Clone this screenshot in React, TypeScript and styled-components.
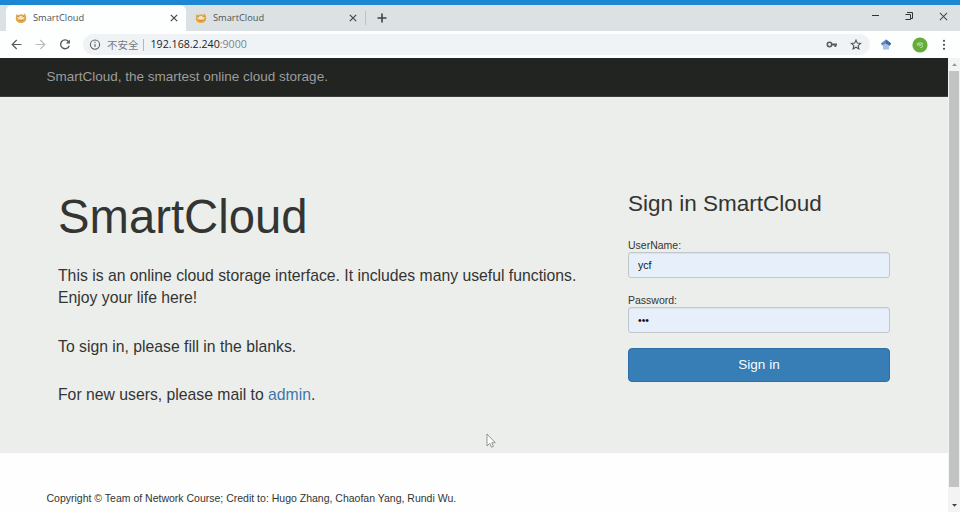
import React from "react";
import styled, { createGlobalStyle } from "styled-components";

const GlobalStyle = createGlobalStyle`
  * { box-sizing: border-box; }
  html, body { margin: 0; padding: 0; overflow: hidden; }
  body { background: #fdfefd; color: #333533; font-family: "Liberation Sans", Arial, sans-serif; }
`;

const Window = styled.div`
  position: relative;
  display: flex;
  flex-direction: column;
  width: 960px;
  height: 512px;
  overflow: hidden;
`;

const TabStrip = styled.div`
  flex: none;
  display: flex;
  height: 31px;
  border-top: 5px solid #1c88d4;
  background: #dce2e3;
  padding-left: 6px;
`;

const Tab = styled.div<{ $active?: boolean }>`
  display: flex;
  align-items: center;
  width: ${(p) => (p.$active ? 180 : 179)}px;
  height: 26px;
  padding: 0 8px 0 9px;
  border-radius: 6px 6px 0 0;
  background: ${(p) => (p.$active ? "#fdfefe" : "transparent")};
  font: 9.3px/12px "Open Sans", "Noto Sans", sans-serif;
  color: #4d5458;
`;

const TabTitle = styled.span`
  flex: 1;
  margin-left: 6px;
`;

const NewTab = styled.div`
  display: flex;
  align-items: center;
  height: 14px;
  margin-top: 6px;
  padding-left: 11px;
  border-left: 1px solid #bdc4c7;
`;

const WindowControls = styled.div`
  display: flex;
  align-items: center;
  gap: 25px;
  height: 22px;
  margin-left: auto;
  padding-right: 12px;
`;

const Toolbar = styled.div`
  flex: none;
  display: flex;
  align-items: center;
  height: 27px;
  padding: 0 11px;
  background: #fdfefe;
`;

const NavButtons = styled.div`
  display: flex;
  gap: 13px;
`;

const AddressBar = styled.div`
  display: flex;
  align-items: center;
  width: 787px;
  height: 21px;
  margin-left: 12px;
  padding: 0 8px 0 6px;
  border-radius: 11px;
  background: #f0f3f5;
  font: 10.65px/14px "Open Sans", "Noto Sans", sans-serif;
  color: #7d8487;
`;

const Security = styled.span`
  margin-left: 6px;
  padding-right: 4px;
  border-right: 1px solid #b3b8bb;
  font: 10.5px/12px "Noto Sans CJK SC", sans-serif;
  color: #73787b;
`;

const Url = styled.span`
  flex: 1;
  margin-left: 7px;
  position: relative;
  top: -0.5px;
  b { font-weight: 400; color: #202426; }
`;

const FieldActions = styled.div`
  display: flex;
  gap: 12px;
`;

const Extensions = styled.div`
  display: flex;
  align-items: center;
  flex: 1;
  padding-left: 10px;
`;

const Avatar = styled.svg`
  margin: 0 11px 0 20px;
`;

const Viewport = styled.div`
  display: flex;
  flex: 1;
  min-height: 0;
`;

const Page = styled.main`
  display: flex;
  flex-direction: column;
  width: 948px;
`;

const Navbar = styled.nav`
  flex: none;
  height: 39px;
  padding-left: 46.5px;
  border-bottom: 1px solid #3c3e3c;
  background: #222422;
  color: #9b9d9b;
  font-size: 13.5px;
  line-height: 38px;
`;

const Jumbotron = styled.section`
  flex: none;
  display: flex;
  justify-content: space-between;
  height: 356px;
  padding: 0 58px;
  background: #eceeec;
`;

const Intro = styled.div`
  width: 540px;
  padding-top: 94px;
`;

const Title = styled.h1`
  margin: 0 0 18px;
  font-size: 47.25px;
  line-height: 52px;
  font-weight: 400;
`;

const Lead = styled.p`
  margin: 0 0 26px;
  padding-top: 4px;
  font-size: 15.75px;
  line-height: 22.4px;
  & + & { padding-top: 0; }
  a { color: #3b77ae; text-decoration: none; }
`;

const SignIn = styled.form`
  width: 262px;
  padding-top: 94px;
`;

const SignInTitle = styled.h2`
  margin: 0 0 22px;
  font-size: 22.5px;
  line-height: 25px;
  font-weight: 400;
`;

const Field = styled.label`
  display: block;
  height: 55px;
  font-size: 10.5px;
  line-height: 15px;
`;

const Input = styled.input`
  display: block;
  width: 262px;
  height: 26px;
  margin-top: -1px;
  padding: 0 9px;
  border: 1px solid #c1c7cb;
  border-radius: 3px;
  outline: none;
  background: #e7effa;
  box-shadow: inset 0 1px 1px rgba(0, 0, 0, 0.06);
  color: #101214;
  font: 10.5px "Liberation Sans", Arial, sans-serif;
`;

const Submit = styled.button`
  display: block;
  width: 262px;
  height: 34px;
  padding: 0 0 1px;
  border: 1px solid #2c6fa6;
  border-radius: 4px;
  background: #367eb5;
  color: #fafcfd;
  font: 13.5px "Liberation Sans", Arial, sans-serif;
`;

const Footer = styled.footer`
  padding: 38px 0 0 46.5px;
  font-size: 10.5px;
  line-height: 15px;
`;

const Scrollbar = styled.div`
  display: flex;
  flex-direction: column;
  align-items: center;
  justify-content: space-between;
  width: 12px;
  background: #f2f3f2;
`;

const ScrollArrow = styled.div`
  display: flex;
  height: 13px;
  align-items: center;
`;

const Thumb = styled.div`
  width: 10px;
  height: 416px;
  margin-bottom: auto;
  background: #c2c4c3;
`;

const Pointer = styled.svg`
  position: absolute;
  left: 486px;
  top: 433px;
`;

const Favicon = () => (
  <svg width="12" height="12" viewBox="0 0 12 12">
    <ellipse cx="6" cy="6.8" rx="5.3" ry="4.2" fill="#e8a83f" />
    <path d="M.8 5 1.4 2.2 3.5 3.2 6 2.5l2.7.6L9.8 1.3 11.3 5Z" fill="#d9ab5e" />
    <path d="M2.4 5Q6 3 9.4 4.9L8.8 7Q6 8.4 3 7Z" fill="#f8e5b1" />
    <path d="M2.5 4.2 4.2 5M9.3 4 7.6 5" stroke="#896947" strokeWidth=".7" />
    <path d="M3.8 8.3q2.2 1 4.4 0" stroke="#cf762c" strokeWidth=".7" fill="none" />
  </svg>
);

const Close = ({ size = 7, weight = 1.2 }: { size?: number; weight?: number }) => (
  <svg width={size} height={size} viewBox="0 0 8 8" stroke="#42484b" strokeWidth={weight}>
    <path d="m.8.8 6.4 6.4m0-6.4L.8 7.2" />
  </svg>
);

const Arrow = ({ forward }: { forward?: boolean }) => (
  <svg width="11" height="12" viewBox="0 0 11 12" fill="none" stroke={forward ? "#b9bcbe" : "#565b5e"} strokeWidth="1.2">
    <path d={forward ? "M.5 5.5h9M5.3 1 9.8 5.5 5.3 10" : "M10.5 5.5h-9M5.7 1 1.2 5.5 5.7 10"} />
  </svg>
);

const tabs = [
  { title: "SmartCloud", active: true },
  { title: "SmartCloud", active: false },
];

export default function App() {
  return (
    <Window>
      <GlobalStyle />
      <TabStrip>
        {tabs.map((tab, i) => (
          <Tab key={i} $active={tab.active}>
            <Favicon />
            <TabTitle>{tab.title}</TabTitle>
            <Close size={8} />
          </Tab>
        ))}
        <NewTab>
          <svg width="10" height="10" viewBox="0 0 10 10" stroke="#3d4346" strokeWidth="1.6">
            <path d="M5 .5v9M.5 5h9" />
          </svg>
        </NewTab>
        <WindowControls>
          <svg width="9" height="9" viewBox="0 0 9 9" stroke="#303537">
            <path d="M1 3.5h7" />
          </svg>
          <svg width="9" height="9" viewBox="0 0 9 9" fill="none" stroke="#303537">
            <path d="M.5 2.5h5v5h-5M2 .5h5.5v6H5.5" />
          </svg>
          <Close size={9} weight={0.9} />
        </WindowControls>
      </TabStrip>
      <Toolbar>
        <NavButtons>
          <Arrow />
          <Arrow forward />
          <svg width="12" height="12" viewBox="0 0 12 12" fill="none" stroke="#54595c" strokeWidth="1.3">
            <path d="M10.2 6.7A4.4 4.4 0 1 1 9.4 2.5" />
            <path d="M10.9.5v4H7Z" fill="#54595c" stroke="none" />
          </svg>
        </NavButtons>
        <AddressBar>
          <svg width="12" height="12" viewBox="0 0 12 12" fill="none" stroke="#5f6467" strokeWidth="1.1">
            <circle cx="6" cy="5.6" r="4.6" />
            <path d="M6 4.9v3.2M6 2.8V4" />
          </svg>
          <Security>不安全</Security>
          <Url><b>192.168.2.240</b>:9000</Url>
          <FieldActions>
            <svg width="12" height="12" viewBox="0 0 12 12" fill="none" stroke="#575c5f">
              <circle cx="3.5" cy="5.5" r="2.2" strokeWidth="1.6" />
              <path d="M5.7 5.5H11M9.3 5.5V8" strokeWidth="1.8" />
            </svg>
            <svg width="12" height="12" viewBox="0 0 12 12" fill="none" stroke="#4d5255" strokeWidth="1.1">
              <path d="m6 1.1 1.3 3 3.3.3-2.5 2.2.8 3.3L6 8.2 3.1 9.9l.8-3.3-2.5-2.2 3.3-.3Z" />
            </svg>
          </FieldActions>
        </AddressBar>
        <Extensions>
          <svg width="12" height="12" viewBox="0 0 12 12">
            <path d="M3 5h6v5.5H3Z" fill="#a8bde8" />
            <path d="M.8 4.6 6 .6l5.2 4-1.7 2.2a4 4 0 0 0-7 0Z" fill="#5f87c2" />
            <path d="m6 .6 5.2 4-1.7 2.2A4 4 0 0 0 6 5Z" fill="#42689f" />
          </svg>
          <Avatar width="16" height="16" viewBox="0 0 16 16">
            <circle cx="8" cy="8" r="7.6" fill="#65ad3b" />
            <path d="M4.7 7.2q3-3 6.5-.4M5.6 8.9q0-2 2.2-1.7M7.6 9.3q0-1.7 1.6-1.6 1.8.3 1.3 1.9-.7 1.2-2.2.9" fill="none" stroke="#cce5bd" strokeWidth=".9" />
          </Avatar>
          <svg width="10" height="12" viewBox="0 0 10 12" fill="#4d5255">
            <circle cx="5" cy="1.8" r="1.1" /><circle cx="5" cy="5.8" r="1.1" /><circle cx="5" cy="9.8" r="1.1" />
          </svg>
        </Extensions>
      </Toolbar>
      <Viewport>
        <Page>
          <Navbar>SmartCloud, the smartest online cloud storage.</Navbar>
          <Jumbotron>
            <Intro>
              <Title>SmartCloud</Title>
              <Lead>This is an online cloud storage interface. It includes many useful functions.<br />Enjoy your life here!</Lead>
              <Lead>To sign in, please fill in the blanks.</Lead>
              <Lead>For new users, please mail to <a href="#admin">admin</a>.</Lead>
            </Intro>
            <SignIn>
              <SignInTitle>Sign in SmartCloud</SignInTitle>
              <Field>UserName:<Input defaultValue="ycf" /></Field>
              <Field>Password:<Input type="password" defaultValue="ycf" /></Field>
              <Submit type="button">Sign in</Submit>
            </SignIn>
          </Jumbotron>
          <Footer>Copyright © Team of Network Course; Credit to: Hugo Zhang, Chaofan Yang, Rundi Wu.</Footer>
        </Page>
        <Scrollbar>
          <ScrollArrow>
            <svg width="5" height="3" viewBox="0 0 5 3"><path d="M0 3 2.5.3 5 3Z" fill="#929594" /></svg>
          </ScrollArrow>
          <Thumb />
          <ScrollArrow>
            <svg width="5" height="3" viewBox="0 0 5 3"><path d="M0 0 2.5 2.8 5 0Z" fill="#404342" /></svg>
          </ScrollArrow>
        </Scrollbar>
      </Viewport>
      <Pointer width="10" height="16" viewBox="0 0 10 16">
        <path d="M1 1v12l2.8-2.6 1.7 3.8 1.9-.8-1.7-3.7h3.5Z" fill="#fff" stroke="#777b79" strokeWidth=".8" />
      </Pointer>
    </Window>
  );
}
